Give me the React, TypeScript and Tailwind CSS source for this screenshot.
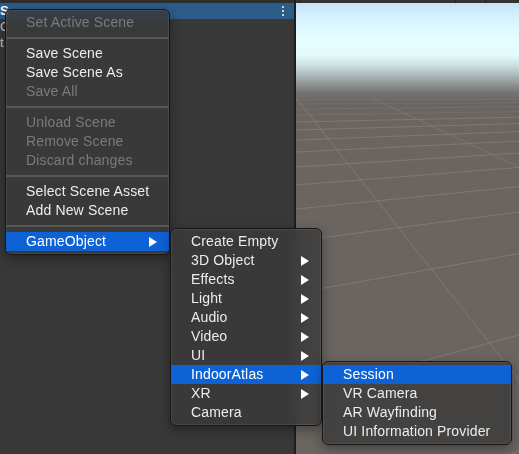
import React from 'react';

type Item = { label?: string; sep?: boolean; disabled?: boolean; active?: boolean; sub?: boolean };

const menuScene: Item[] = [
  { label: 'Set Active Scene', disabled: true },
  { sep: true },
  { label: 'Save Scene' },
  { label: 'Save Scene As' },
  { label: 'Save All', disabled: true },
  { sep: true },
  { label: 'Unload Scene', disabled: true },
  { label: 'Remove Scene', disabled: true },
  { label: 'Discard changes', disabled: true },
  { sep: true },
  { label: 'Select Scene Asset' },
  { label: 'Add New Scene' },
  { sep: true },
  { label: 'GameObject', active: true, sub: true },
];

const menuGameObject: Item[] = [
  { label: 'Create Empty' },
  { label: '3D Object', sub: true },
  { label: 'Effects', sub: true },
  { label: 'Light', sub: true },
  { label: 'Audio', sub: true },
  { label: 'Video', sub: true },
  { label: 'UI', sub: true },
  { label: 'IndoorAtlas', active: true, sub: true },
  { label: 'XR', sub: true },
  { label: 'Camera' },
];

const menuAtlas: Item[] = [
  { label: 'Session', active: true },
  { label: 'VR Camera' },
  { label: 'AR Wayfinding' },
  { label: 'UI Information Provider' },
];

function Arrow() {
  return (
    <svg width="8" height="10" viewBox="0 0 8 10" className="shrink-0">
      <polygon points="0,0 8,5 0,10" fill="#ffffff" />
    </svg>
  );
}

function Menu({ items, className }: { items: Item[]; className: string }) {
  return (
    <div
      className={`absolute rounded-[6px] border border-[#161616] bg-[#3a3a3a]/80 py-[3px] shadow-[0_4px_12px_rgba(0,0,0,0.35),inset_0_0_0_1px_rgba(255,255,255,0.08)] backdrop-blur-sm ${className}`}
    >
      {items.map((it, i) =>
        it.sep ? (
          <div key={i} className="flex h-[12px] items-center">
            <div className="h-[2px] w-full bg-[#575757]" />
          </div>
        ) : (
          <div
            key={i}
            className={`flex h-[19px] items-center justify-between pl-[20px] pr-[12px] text-[14px] leading-[19px] tracking-[0.15px] whitespace-nowrap ${
              it.active ? 'bg-[#0d63d6] text-white' : it.disabled ? 'text-[#7b7b7b]' : 'text-[#ececec]'
            }`}
          >
            <span>{it.label}</span>
            {it.sub && <Arrow />}
          </div>
        )
      )}
    </div>
  );
}

const horizon = 98;
const vx = 1400;
const rows = [100, 104, 109, 115, 122, 130, 140, 152, 167, 185, 209, 241, 293, 395, 540];

function SceneView() {
  return (
    <svg width="223" height="454" viewBox="296 0 223 454" className="block">
      <defs>
        <linearGradient id="sky" gradientUnits="userSpaceOnUse" x1="0" y1="3" x2="0" y2="102">
          <stop offset="0" stopColor="#c5e4f8" />
          <stop offset="0.18" stopColor="#d9f5ff" />
          <stop offset="0.38" stopColor="#e5feff" />
          <stop offset="0.53" stopColor="#e2fafb" />
          <stop offset="0.63" stopColor="#cddfe0" />
          <stop offset="0.73" stopColor="#aeb9ba" />
          <stop offset="0.83" stopColor="#8c9091" />
          <stop offset="0.91" stopColor="#747272" />
          <stop offset="1" stopColor="#6a6561" />
        </linearGradient>
      </defs>
      <rect x="296" y="0" width="223" height="454" fill="#6a6561" />
      <rect x="296" y="3" width="223" height="99" fill="url(#sky)" />
      <g stroke="#85807c" strokeWidth="1" fill="none">
        {rows.map((y, i) => {
          const yr = horizon + ((y - horizon) * (vx - 519)) / (vx - 296);
          return <line key={i} x1="296" y1={y} x2="519" y2={yr} opacity={i < 4 ? 0.4 : 0.75} />;
        })}
        <line x1="296" y1="98" x2="519" y2="380" opacity="0.75" />
        <line x1="372" y1="98" x2="519" y2="167" opacity="0.6" />
      </g>
      <rect x="296" y="0" width="223" height="3" fill="#333333" />
      <rect x="300" y="0" width="1" height="3" fill="#222222" />
      <rect x="455" y="0" width="1" height="3" fill="#222222" />
      <rect x="485" y="0" width="1" height="3" fill="#222222" />
    </svg>
  );
}

export default function App() {
  return (
    <div className="relative flex h-[454px] w-[519px] overflow-hidden bg-[#383838] font-['Liberation_Sans',Arial,sans-serif]">
      {/* Hierarchy (mostly hidden behind the menu) */}
      <div className="flex w-[294px] shrink-0 flex-col bg-[#383838]">
        <div className="h-[3px] bg-[#2e2e2e]" />
        <div className="flex h-[16px] items-center justify-between bg-[#2c5c88] pr-[10px]">
          <span className="text-[13px] font-bold text-white">S</span>
          <div className="flex flex-col gap-[2px]">
            <span className="block h-[2px] w-[2px] bg-[#cfcfcf]" />
            <span className="block h-[2px] w-[2px] bg-[#cfcfcf]" />
            <span className="block h-[2px] w-[2px] bg-[#cfcfcf]" />
          </div>
        </div>
        <div className="flex flex-col items-start text-[13px] leading-[16px] text-[#c8c8c8]">
          <span>C</span>
          <span>t</span>
        </div>
      </div>
      <div className="w-[2px] shrink-0 bg-[#1e1e1e]" />
      <div className="flex-1">
        <SceneView />
      </div>

      {/* context menus */}
      <Menu items={menuScene} className="left-[5px] top-[9px] w-[165px]" />
      <Menu items={menuGameObject} className="left-[170px] top-[228px] w-[152px]" />
      <Menu items={menuAtlas} className="left-[322px] top-[361px] w-[190px]" />
    </div>
  );
}
